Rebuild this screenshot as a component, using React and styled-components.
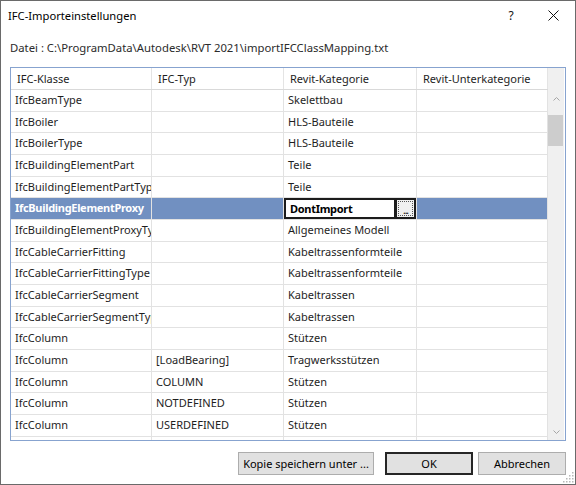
import styled, { createGlobalStyle } from 'styled-components';

const GlobalStyle = createGlobalStyle`
  html, body {
    margin: 0;
    padding: 0;
    background: #ffffff;
  }
  body {
    font-family: 'Segoe UI', 'Noto Sans', sans-serif;
  }
`;

const Window = styled.div`
  position: relative;
  width: 576px;
  height: 485px;
  box-sizing: border-box;
  border: 1px solid #6a6a6a;
  background: #ffffff;
  display: flex;
  flex-direction: column;
  font-size: 11px;
  color: #1e1e1e;
`;

const TitleBar = styled.div`
  height: 28px;
  display: flex;
  align-items: center;
  padding-left: 7px;
`;

const Title = styled.span`
  flex: 1;
  font-size: 11.2px;
  color: #000;
`;

const TitleButton = styled.div`
  width: ${(p) => p.$w}px;
  height: 28px;
  display: flex;
  align-items: center;
  justify-content: center;
  font-size: 12px;
  color: #111;
`;

const Content = styled.div`
  flex: 1;
  display: flex;
  flex-direction: column;
  padding: 0 9px;
`;

const PathLine = styled.div`
  margin-top: 11px;
  height: 16px;
  line-height: 16px;
  font-size: 11.3px;
  color: #2b2b2b;
  white-space: nowrap;
`;

const Grid = styled.div`
  margin-top: 11px;
  height: 374px;
  box-sizing: border-box;
  border: 1px solid #87a3cf;
  display: flex;
  overflow: hidden;
`;

const Table = styled.div`
  width: 537px;
  display: flex;
  flex-direction: column;
  overflow: hidden;
`;

const HeaderRow = styled.div`
  display: grid;
  grid-template-columns: 141px 132px 133px 131px;
  height: 22px;
  flex: none;
  box-sizing: border-box;
  border-bottom: 1px solid #d9d9d9;
`;

const HeaderCell = styled.div`
  box-sizing: border-box;
  border-right: 1px solid #e4e4e4;
  padding-left: 6px;
  line-height: 21px;
  white-space: nowrap;
  overflow: hidden;
`;

const Row = styled.div`
  display: grid;
  grid-template-columns: 141px 132px 133px 131px;
  height: 21.67px;
  flex: none;
  box-sizing: border-box;
  border-bottom: 1px solid #e2e2e2;
  background: ${(p) => (p.$selected ? '#7190c1' : '#ffffff')};
  color: ${(p) => (p.$selected ? '#ffffff' : '#1e1e1e')};
  font-weight: ${(p) => (p.$selected ? 700 : 400)};
  letter-spacing: ${(p) => (p.$selected ? '-0.3px' : 'normal')};
`;

const Cell = styled.div`
  box-sizing: border-box;
  border-right: 1px solid #e2e2e2;
  padding-left: 4px;
  line-height: 20px;
  white-space: nowrap;
  overflow: hidden;
`;

const EditorCell = styled.div`
  display: flex;
  box-sizing: border-box;
  border-right: 1px solid #e2e2e2;
  height: 100%;
`;

const EditBox = styled.div`
  flex: 1;
  box-sizing: border-box;
  background: #ffffff;
  border: 2px solid #1c1c1c;
  color: #000;
  font-weight: 700;
  padding-left: 4px;
  line-height: 17px;
  white-space: nowrap;
  overflow: hidden;
`;

const DotButton = styled.div`
  width: 20px;
  box-sizing: border-box;
  border: 2px solid #1c1c1c;
  border-left: 1px solid #1c1c1c;
  background: #f0f0f0;
  padding: 1px;
  display: flex;
`;

const FocusRect = styled.div`
  flex: 1;
  border: 1px dotted #555;
  display: flex;
  align-items: flex-end;
  justify-content: center;
  color: #000;
  font-weight: 400;
  font-size: 10px;
  line-height: 9px;
  letter-spacing: -1px;
`;

const ScrollBar = styled.div`
  width: 16px;
  background: #f0f0f0;
  display: flex;
  flex-direction: column;
`;

const ScrollFiller = styled.div`
  height: 22px;
  flex: none;
`;

const ArrowButton = styled.div`
  height: 17px;
  flex: none;
  display: flex;
  align-items: center;
  justify-content: center;
`;

const Track = styled.div`
  flex: 1;
  padding-top: 8px;
`;

const Thumb = styled.div`
  width: 15px;
  height: 31px;
  background: #cdcdcd;
`;

const ButtonRow = styled.div`
  margin-top: 11px;
  display: flex;
  justify-content: flex-end;
`;

const Button = styled.button`
  width: ${(p) => p.$w}px;
  height: 23px;
  margin-left: ${(p) => p.$gap}px;
  box-sizing: border-box;
  background: #e1e1e1;
  border: ${(p) => (p.$default ? '2px solid #262626' : '1px solid #adadad')};
  font-family: inherit;
  font-size: 11px;
  color: #000;
  padding: 0;
  white-space: nowrap;
`;

const Grip = styled.svg`
  position: absolute;
  right: 1px;
  bottom: 1px;
`;

const Chevron = ({ up }) => (
  <svg width="7" height="4" viewBox="0 0 7 4">
    <path
      d={up ? 'M0.5 3.5 L3.5 0.5 L6.5 3.5' : 'M0.5 0.5 L3.5 3.5 L6.5 0.5'}
      fill="none"
      stroke="#a6a6a6"
      strokeWidth="1"
    />
  </svg>
);

const rows = [
  ['IfcBeamType', '', 'Skelettbau'],
  ['IfcBoiler', '', 'HLS-Bauteile'],
  ['IfcBoilerType', '', 'HLS-Bauteile'],
  ['IfcBuildingElementPart', '', 'Teile'],
  ['IfcBuildingElementPartType', '', 'Teile'],
  ['IfcBuildingElementProxy', '', 'DontImport', true],
  ['IfcBuildingElementProxyType', '', 'Allgemeines Modell'],
  ['IfcCableCarrierFitting', '', 'Kabeltrassenformteile'],
  ['IfcCableCarrierFittingType', '', 'Kabeltrassenformteile'],
  ['IfcCableCarrierSegment', '', 'Kabeltrassen'],
  ['IfcCableCarrierSegmentType', '', 'Kabeltrassen'],
  ['IfcColumn', '', 'Stützen'],
  ['IfcColumn', '[LoadBearing]', 'Tragwerksstützen'],
  ['IfcColumn', 'COLUMN', 'Stützen'],
  ['IfcColumn', 'NOTDEFINED', 'Stützen'],
  ['IfcColumn', 'USERDEFINED', 'Stützen'],
  ['IfcColumnType', '', 'Stützen'],
];

export default function App() {
  return (
    <>
      <GlobalStyle />
      <Window>
        <TitleBar>
          <Title>IFC-Importeinstellungen</Title>
          <TitleButton $w={42}>?</TitleButton>
          <TitleButton $w={43}>
            <svg width="11" height="11" viewBox="0 0 11 11">
              <path d="M0.5 0.5 L10.5 10.5 M10.5 0.5 L0.5 10.5" stroke="#111" strokeWidth="1" />
            </svg>
          </TitleButton>
        </TitleBar>
        <Content>
          <PathLine>Datei : C:\ProgramData\Autodesk\RVT 2021\importIFCClassMapping.txt</PathLine>
          <Grid>
            <Table>
              <HeaderRow>
                <HeaderCell>IFC-Klasse</HeaderCell>
                <HeaderCell>IFC-Typ</HeaderCell>
                <HeaderCell>Revit-Kategorie</HeaderCell>
                <HeaderCell>Revit-Unterkategorie</HeaderCell>
              </HeaderRow>
              {rows.map(([cls, typ, cat, sel], i) => (
                <Row key={i} $selected={sel}>
                  <Cell>{cls}</Cell>
                  <Cell>{typ}</Cell>
                  {sel ? (
                    <EditorCell>
                      <EditBox>{cat}</EditBox>
                      <DotButton>
                        <FocusRect>...</FocusRect>
                      </DotButton>
                    </EditorCell>
                  ) : (
                    <Cell>{cat}</Cell>
                  )}
                  <Cell />
                </Row>
              ))}
            </Table>
            <ScrollBar>
              <ScrollFiller />
              <ArrowButton>
                <Chevron up />
              </ArrowButton>
              <Track>
                <Thumb />
              </Track>
              <ArrowButton>
                <Chevron />
              </ArrowButton>
            </ScrollBar>
          </Grid>
          <ButtonRow>
            <Button $w={136} $gap={0}>Kopie speichern unter ...</Button>
            <Button $w={88} $gap={11} $default>OK</Button>
            <Button $w={88} $gap={5}>Abbrechen</Button>
          </ButtonRow>
        </Content>
        <Grip width="11" height="11" viewBox="0 0 11 11">
          {[
            [9, 1], [9, 4], [6, 4], [9, 7], [6, 7], [3, 7], [9, 10], [6, 10], [3, 10], [0, 10],
          ].map(([x, y], i) => (
            <rect key={i} x={x} y={y - 1} width="1.5" height="1.5" fill="#b8b8b8" />
          ))}
        </Grip>
      </Window>
    </>
  );
}
